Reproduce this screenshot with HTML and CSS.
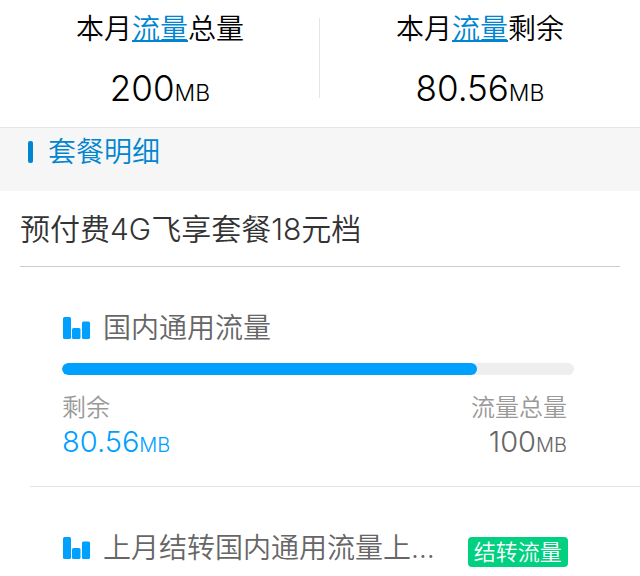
FILE: index.html
```html
<!DOCTYPE html>
<html lang="zh-CN">
<head>
<meta charset="utf-8">
<meta name="viewport" content="width=device-width, initial-scale=1">
<title>套餐明细</title>
<link rel="stylesheet" href="styles.css">
</head>
<body>
<main>
  <section class="summary">
    <div class="summary-item">
      <p class="summary-label">本月<a href="#detail">流量</a>总量</p>
      <p class="summary-value">200<small>MB</small></p>
    </div>
    <div class="summary-item">
      <p class="summary-label">本月<a href="#detail">流量</a>剩余</p>
      <p class="summary-value">80.56<small>MB</small></p>
    </div>
  </section>
  <h1 class="section-title" id="detail">套餐明细</h1>
  <h2 class="plan">预付费4G飞享套餐18元档</h2>
  <section class="usage">
    <h3 class="usage-head">
      <svg class="bars" viewBox="0 0 28 22" aria-hidden="true"><rect x="1" y="0" width="8" height="22" rx="1.5"/><rect x="10" y="11" width="8.5" height="11" rx="1.5"/><rect x="20" y="4.5" width="8" height="17.5" rx="1.5"/></svg>
      <span class="usage-name">国内通用流量</span>
    </h3>
    <div class="track" role="progressbar" aria-valuemin="0" aria-valuemax="100" aria-valuenow="81" aria-label="国内通用流量"><div class="fill" style="width:81%"></div></div>
    <div class="figures">
      <div><p class="caption">剩余</p><p class="amount left">80.56<small>MB</small></p></div>
      <div class="total"><p class="caption">流量总量</p><p class="amount">100<small>MB</small></p></div>
    </div>
  </section>
  <section class="usage next">
    <h3 class="usage-head">
      <svg class="bars" viewBox="0 0 28 22" aria-hidden="true"><rect x="1" y="0" width="8" height="22" rx="1.5"/><rect x="10" y="11" width="8.5" height="11" rx="1.5"/><rect x="20" y="4.5" width="8" height="17.5" rx="1.5"/></svg>
      <span class="usage-name">上月结转国内通用流量上…</span>
      <span class="tag">结转流量</span>
    </h3>
  </section>
</main>
</body>
</html>
```
FILE: styles.css
```css
* { box-sizing: border-box; }
body, h1, h2, h3, p { margin: 0; font-weight: 350; }
body { background: #fff; color: #000; font-family: Inter, "Noto Sans CJK SC DemiLight", "Noto Sans CJK SC", sans-serif; }
small { line-height: 1; }
.summary { display: flex; padding: 9px 0 15px; }
.summary-item { flex: 1; text-align: center; position: relative; }
.summary-item + .summary-item::before { content: ""; position: absolute; left: -1px; top: 9px; height: 80px; width: 1px; background: #e5e5e5; }
.summary-label { font-size: 28px; line-height: 40px; }
.summary-label a { color: #0085d0; text-underline-offset: 1px; text-decoration-thickness: 2px; }
.summary-value { margin-top: 15px; font-size: 35px; line-height: 48px; }
.summary-value small { font-size: 23px; }
.section-title { display: flex; align-items: center; gap: 15px; height: 64px; padding: 0 28px 15px; border-top: 1px solid #e5e5e5; background: #f6f6f6; color: #0085d0; font-size: 28px; line-height: 40px; }
.section-title::before { content: ""; width: 5px; height: 22px; border-radius: 2px; background: #0085d0; }
.plan { margin: 0 20px; padding: 16px 0 15px; border-bottom: 1px solid #ccc; color: #333; font-size: 30px; line-height: 44px; }
.usage { margin-left: 30px; padding: 41px 66px 26px 32px; }
.usage.next { padding-bottom: 8px; border-top: 1px solid #e5e5e5; }
.usage-head { display: flex; align-items: center; font-size: 28px; line-height: 40px; color: #666; white-space: nowrap; }
.bars { flex: none; width: 28px; height: 22px; margin-right: 13px; fill: #00a0ff; }
.tag { margin: 8px 0 0 33px; padding: 0 6px; border-radius: 4px; background: #00d080; color: #fff; font-size: 22px; line-height: 30px; }
.track { height: 12px; margin-top: 15px; border-radius: 6px; background: #eee; overflow: hidden; }
.fill { height: 100%; border-radius: 6px; background: #00a0ff; }
.figures { display: flex; justify-content: space-between; padding-right: 7px; margin-top: 16px; }
.total { text-align: right; }
.caption { color: #999; font-size: 24px; line-height: 33px; }
.amount { color: #666; font-size: 29px; line-height: 36px; }
.amount small { font-size: 20px; }
.amount.left { color: #00a0ff; }
```
